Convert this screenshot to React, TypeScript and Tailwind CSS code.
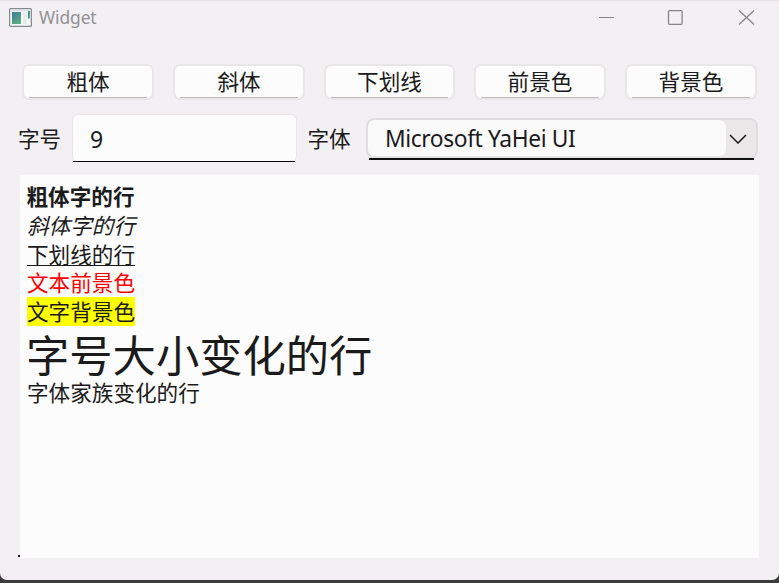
import type { ReactNode } from 'react';

const UI = "font-['Noto_Sans','Noto_Sans_CJK_SC',sans-serif]";
const CJK = "font-['Noto_Sans_CJK_SC',sans-serif]";

function AppIcon() {
  return (
    <svg width="23" height="19" viewBox="0 0 23 19" className="mt-px block">
      <defs>
        <linearGradient id="pane" x1="0" y1="0" x2="0.6" y2="1">
          <stop offset="0" stopColor="#3f78a0" />
          <stop offset="1" stopColor="#5aae80" />
        </linearGradient>
      </defs>
      <rect x="0.6" y="0.6" width="21.8" height="17.8" rx="1" fill="#f4f6f6" stroke="#85898e" strokeWidth="1.2" />
      <rect x="1.5" y="1.5" width="20" height="1.5" fill="#dadfe5" />
      <rect x="3" y="4" width="9" height="12" fill="url(#pane)" />
      <rect x="14" y="4" width="4" height="12" fill="#e9eceb" />
      <path d="M19 3h2v7l-2 1z" fill="url(#pane)" />
    </svg>
  );
}

function PushButton({ children, width }: { children: ReactNode; width: string }) {
  return (
    <button className={`${width} ${CJK} flex h-[36px] flex-col rounded-[7px] border-2 border-[#e8e6e7] bg-[#fcfcfc] text-[21.6px] leading-[32px] text-[#1b1b1b]`}>
      <span className="mt-[-1px] h-[33px] w-full text-center">{children}</span>
      <span className="mx-[5px] h-px shrink-0 self-stretch bg-[#bcbbbc]" />
    </button>
  );
}

export default function App() {
  return (
    <div className="h-[583px] w-[779px] overflow-hidden bg-[#3c3b3c]">
      <div className="flex h-[580px] flex-col overflow-hidden rounded-b-[7px] border-t border-[#e6e2e4] bg-[#f2f0f2]">
        <header className="flex h-[63px] shrink-0 items-start pl-[9px] pt-[6px]">
          <AppIcon />
          <span className="ml-[7px] mt-[-2px] flex-1 font-['Noto_Sans',sans-serif] text-[17.4px] leading-[24px] tracking-[-0.1px] text-[#929192]">Widget</span>
          <svg width="180" height="24" viewBox="0 0 180 24" fill="none" stroke="#878687" strokeWidth="1.3">
            <path d="M0 10.5h15" strokeWidth="1" />
            <rect x="69.5" y="3.7" width="13.6" height="13.6" rx="1" />
            <path d="M140 3.5l15 14M155 3.5l-15 14" />
          </svg>
        </header>
        <div className="ml-[22px] mr-[22px] flex shrink-0 justify-between">
          <PushButton width="w-[132px]">粗体</PushButton>
          <PushButton width="w-[132px]">斜体</PushButton>
          <PushButton width="w-[131px]">下划线</PushButton>
          <PushButton width="w-[132px]">前景色</PushButton>
          <PushButton width="w-[132px]">背景色</PushButton>
        </div>
        <div className="mt-[14px] flex h-[48px] shrink-0 items-center text-[21.6px] text-[#1b1b1b]">
          <label className={`${CJK} ml-[18px] w-[54px] whitespace-nowrap`}>字号</label>
          <div className="flex h-[48px] w-[225px] flex-col rounded-[6px] border border-b-0 border-[#e8e6e7] bg-[#fcfcfc]">
            <span className={`${UI} h-[45.5px] pl-[17px] text-[23px] leading-[48px]`}>9</span>
            <span className="mr-px h-[1.5px] bg-black" />
          </div>
          <label className={`${CJK} ml-[10.5px] w-[58.5px] whitespace-nowrap`}>字体</label>
          <div className="mt-[2px] flex h-[42px] w-[392px] flex-col">
            <div className="flex h-[41px] shrink-0 rounded-[8px] border-2 border-[#dfdedf] bg-[#e9e7e8]">
              <span className="h-[36px] w-[358px] rounded-[7px] bg-[#fbfafb] pl-[17px] font-['Noto_Sans',sans-serif] text-[22.8px] leading-[37px] tracking-[-0.4px] whitespace-nowrap">Microsoft YaHei UI</span>
              <svg width="18" height="10" viewBox="0 0 18 10" className="ml-[3px] mt-[14px]" fill="none" stroke="#1b1b1b" strokeWidth="1.5">
                <path d="M1 1l8 8 8-8" />
              </svg>
            </div>
            <span className="mt-[-1px] ml-[3px] mr-[4px] h-[2px] shrink-0 bg-[#111]" />
          </div>
        </div>
        <main className={`${CJK} ml-[20px] mt-[13px] h-[383px] w-[739px] shrink-0 bg-[#fcfcfc] pl-[7px] pt-[7px] text-[21.6px] leading-[28.8px] text-[#1b1b1b]`}>
          <p className="ml-[-0.5px] font-bold">粗体字的行</p>
          <p className="italic">斜体字的行</p>
          <p className="underline decoration-1 underline-offset-[2px]">下划线的行</p>
          <p className="text-[#f00]">文本前景色</p>
          <p className="w-[108px] bg-[#ff0]">文字背景色</p>
          <p className="ml-[-1px] h-[52px] text-[43.3px] leading-[55px]">字号大小变化的行</p>
          <p>字体家族变化的行</p>
        </main>
        <span className="ml-[18px] mt-[-3px] h-[2px] w-[2px] shrink-0 bg-[#222]" />
      </div>
    </div>
  );
}
